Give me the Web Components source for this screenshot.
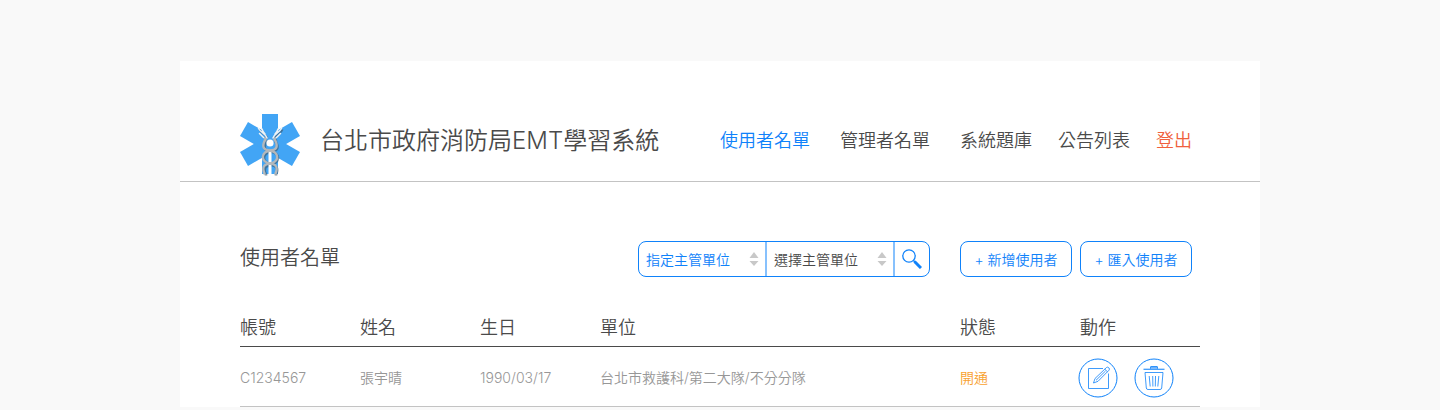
<!DOCTYPE html>
<html lang="zh-Hant">
<head>
<meta charset="utf-8">
<meta name="viewport" content="width=device-width, initial-scale=1">
<title>台北市政府消防局EMT學習系統</title>
<style>
  body {
    margin: 0;
    background: #f9f9f9;
    color: #4a4a4a;
    font-family: Inter, "Noto Sans CJK TC", sans-serif;
    font-weight: 350;
    --blue: #0f82fa;
    --blue-soft: #87c1fd;
    --red: #f0603c;
    --orange: #f8a12f;
    --muted: #979797;
    --line: #c3c3c3;
    --gutter: 60px;
  }
</style>
</head>
<body>
<app-page>
  <site-header slot="header" heading="台北市政府消防局EMT學習系統">
    <nav-link current href="#users">使用者名單</nav-link>
    <nav-link href="#managers">管理者名單</nav-link>
    <nav-link href="#questions">系統題庫</nav-link>
    <nav-link href="#notices">公告列表</nav-link>
    <nav-link danger href="#logout">登出</nav-link>
  </site-header>
  <list-toolbar heading="使用者名單">
    <unit-search slot="search"></unit-search>
    <outline-button>+ 新增使用者</outline-button>
    <outline-button>+ 匯入使用者</outline-button>
  </list-toolbar>
  <user-table></user-table>
</app-page>

<script>
  const define = (name, markup, setup) => {
    const template = document.createElement('template');
    template.innerHTML = markup;
    customElements.define(name, class extends HTMLElement {
      constructor() {
        super();
        this.attachShadow({ mode: 'open' }).append(template.content.cloneNode(true));
      }
      connectedCallback() {
        if (setup) setup(this, this.shadowRoot);
      }
    });
  };

  define('app-page', `
    <style>
      :host { display: block; max-width: 1080px; margin: 61px auto 0; background: #fff; }
      main { padding: 0 var(--gutter); }
    </style>
    <slot name="header"></slot>
    <main><slot></slot></main>
  `);

  define('emt-logo', `
    <style>
      :host { display: block; width: 60px; height: 64px; }
      svg { display: block; }
    </style>
    <svg width="60" height="64" viewBox="0 0 60 64" aria-hidden="true">
      <g fill="#42a5f5">
        <rect x="22" y="0" width="16" height="60"/>
        <rect x="22" y="0" width="16" height="60" transform="rotate(60 30 30)"/>
        <rect x="22" y="0" width="16" height="60" transform="rotate(-60 30 30)"/>
      </g>
      <g fill="none" stroke="#3d5566" stroke-width="2.600" opacity=".6" transform="translate(1 1)">
        <path d="M24 25Q27 26 24.500 28Q21 36 30 36.500Q39 36 35.500 28Q33 26 36 25"/>
        <ellipse cx="30" cy="43" rx="7" ry="6"/>
        <path d="M25 60.500V59.500Q21 51 30 50Q39 51 35 59.500V60.500"/>
        <path stroke-width="2" d="M26 23C25 19 20 19 18.500 14.500M34 23C35 19 40 19 41.500 14.500"/>
      </g>
      <path d="M30 37V60" stroke="#fff" stroke-width="3"/>
      <g fill="none" stroke="#eef2f5" stroke-width="1.500" stroke-linecap="round">
        <path d="M27 24C26 20 21 19 18.500 14.500M25 20C23 18 22.500 17 22 15M23.500 23.500L19.500 19.500"/>
        <path d="M33 24C34 20 39 19 41.500 14.500M35 20C37 18 37.500 17 38 15M36.500 23.500L40.500 19.500"/>
      </g>
      <g fill="none" stroke="#b3b8bc" stroke-width="2.400">
        <path d="M24 24Q27 25 24.500 27Q20.500 36 30 36.500Q39.500 36 35.500 27Q33 25 36 24"/>
        <ellipse cx="30" cy="43" rx="7.200" ry="6.300"/>
        <path d="M24.500 60.500V59.500Q20.500 50.500 30 49.500Q39.500 50.500 35.500 59.500V60.500"/>
      </g>
      <circle cx="30" cy="29" r="3.600" fill="#fff"/>
    </svg>
  `);

  define('site-header', `
    <style>
      header {
        display: flex; align-items: center; gap: 20px; box-sizing: border-box;
        min-height: 121px; padding: 40px 68px 0 var(--gutter);
        border-bottom: 1px solid var(--line);
      }
      emt-logo { margin-top: 10px; }
      h1 { flex: 1; margin: 0; font-size: 24px; line-height: 36px; font-weight: inherit; white-space: nowrap; }
      nav { display: grid; grid-template-columns: 120px 120px 98px 98px 36px; }
    </style>
    <header>
      <emt-logo></emt-logo>
      <h1></h1>
      <nav><slot></slot></nav>
    </header>
  `, (host, root) => { root.querySelector('h1').textContent = host.getAttribute('heading'); });

  define('nav-link', `
    <style>
      :host { display: block; font-size: 18px; line-height: 28px; white-space: nowrap; }
      a { color: inherit; text-decoration: none; }
      :host([current]) { color: var(--blue); }
      :host([danger]) { color: var(--red); }
    </style>
    <a><slot></slot></a>
  `, (host, root) => { root.querySelector('a').href = host.getAttribute('href'); });

  define('list-toolbar', `
    <style>
      :host { display: flex; align-items: center; padding: 59px 8px 0 0; }
      h2 { flex: 1; margin: 0; padding-bottom: 2px; font-size: 20px; line-height: 32px; font-weight: inherit; }
      .actions { display: flex; gap: 8px; margin-left: 30px; }
    </style>
    <h2></h2>
    <slot name="search"></slot>
    <div class="actions"><slot></slot></div>
  `, (host, root) => { root.querySelector('h2').textContent = host.getAttribute('heading'); });

  define('outline-button', `
    <style>
      :host { display: block; }
      button {
        display: block; box-sizing: border-box; width: 112px; height: 36px; padding: 0;
        border: 1px solid var(--blue); border-radius: 8px; background: #fff;
        color: var(--blue); font: inherit; font-size: 14px; cursor: pointer;
      }
    </style>
    <button type="button"><slot></slot></button>
  `);

  define('unit-search', `
    <style>
      :host { display: block; }
      form {
        display: flex; box-sizing: border-box; height: 36px;
        border: 1px solid var(--blue); border-radius: 8px; overflow: hidden;
      }
      .field { display: flex; position: relative; width: 128px; box-sizing: border-box; border-right: 2px solid var(--blue-soft); }
      select {
        appearance: none; width: 100%; margin: 0; padding: 0 24px 0 7px; border: 0; border-radius: 0;
        background: none; color: inherit; font: inherit; font-size: 14px;
      }
      .primary { color: var(--blue); }
      .field svg { position: absolute; right: 6px; top: 10px; pointer-events: none; }
      button { display: grid; place-items: center; width: 34px; padding: 0; border: 0; background: none; cursor: pointer; }
    </style>
    <form>
      <div class="field primary">
        <select aria-label="指定主管單位"><option>指定主管單位</option></select>
        <svg width="10" height="14" viewBox="0 0 10 14" fill="#c8c8c8" aria-hidden="true"><path d="M5 0L9.500 6H.5zM5 14L9.500 9H.5z"/></svg>
      </div>
      <div class="field">
        <select aria-label="選擇主管單位"><option>選擇主管單位</option></select>
        <svg width="10" height="14" viewBox="0 0 10 14" fill="#c8c8c8" aria-hidden="true"><path d="M5 0L9.500 6H.5zM5 14L9.500 9H.5z"/></svg>
      </div>
      <button type="button" aria-label="搜尋">
        <svg width="20" height="20" viewBox="0 0 20 20" fill="none" stroke="#0f82fa" aria-hidden="true">
          <circle cx="7" cy="7" r="6.200" stroke-width="1.300"/>
          <path d="M11.500 11.500L13 13" stroke-width="1.500"/>
          <path d="M12.500 12.500L19 19" stroke-width="3"/>
        </svg>
      </button>
    </form>
  `);

  define('icon-button', `
    <style>
      :host { display: block; }
      button {
        display: grid; place-items: center; width: 40px; height: 40px; padding: 0;
        border: 0; background: none; cursor: pointer;
      }
      svg { display: none; }
      :host([kind="edit"]) .edit, :host([kind="delete"]) .delete { display: block; }
    </style>
    <button type="button">
      <svg class="edit" width="40" height="40" viewBox="0 0 40 40" fill="none" stroke="#0f82fa" aria-hidden="true">
        <circle cx="20" cy="20" r="19"/>
        <g stroke-opacity=".8">
          <path d="M25 10.500H10.500V30.500H30.500V15.500"/>
          <path d="M15.500 25L17 20.500L28.500 9.500Q29.500 8.500 31 10Q32 11 31 12.200L20 23.300zM26.800 11.200L29.500 13.800M18 22.300L27.500 13"/>
        </g>
      </svg>
      <svg class="delete" width="40" height="40" viewBox="0 0 40 40" fill="none" stroke="#0f82fa" aria-hidden="true">
        <circle cx="20" cy="20" r="19"/>
        <g stroke-opacity=".8">
          <path d="M9.500 11.300H30.500" stroke-width="1.300"/>
          <path d="M16.500 10.800V9Q16.500 8.500 17 8.500H23Q23.500 8.500 23.500 9V10.800" fill="#6bb1fb"/>
          <path d="M11 14.500H29L27.700 30Q27.500 31.500 26 31.500H14Q12.500 31.500 12.300 30z"/>
          <path d="M15.200 18L16.200 28.500M18.700 18L18.900 28.500M21.500 18L21.300 28.500M24.800 18L23.800 28.500"/>
        </g>
      </svg>
    </button>
  `, (host, root) => { root.querySelector('button').setAttribute('aria-label', host.getAttribute('label')); });

  define('user-table', `
    <style>
      :host { display: block; padding-top: 29px; }
      table { width: 100%; table-layout: fixed; border-collapse: separate; border-spacing: 0; }
      col { width: 12.5%; }
      col.unit { width: 37.5%; }
      th, td { padding: 0; text-align: left; font-weight: inherit; white-space: nowrap; }
      th { height: 36px; padding-top: 4px; border-bottom: 1px solid #4a4a4a; font-size: 18px; line-height: 28px; }
      td { height: 57px; padding-top: 2px; border-bottom: 1px solid var(--line); font-size: 14px; line-height: 20px; color: var(--muted); }
      td.open { color: var(--orange); }
      .actions { display: flex; gap: 16px; margin-left: -2px; }
    </style>
    <table>
      <colgroup><col><col><col><col class="unit"><col><col></colgroup>
      <thead>
        <tr>
          <th scope="col">帳號</th><th scope="col">姓名</th><th scope="col">生日</th>
          <th scope="col">單位</th><th scope="col">狀態</th><th scope="col">動作</th>
        </tr>
      </thead>
      <tbody>
        <tr>
          <td>C1234567</td><td>張宇晴</td><td>1990/03/17</td>
          <td>台北市救護科/第二大隊/不分分隊</td><td class="open">開通</td>
          <td><div class="actions">
            <icon-button kind="edit" label="編輯"></icon-button>
            <icon-button kind="delete" label="刪除"></icon-button>
          </div></td>
        </tr>
      </tbody>
    </table>
  `);
</script>
</body>
</html>
